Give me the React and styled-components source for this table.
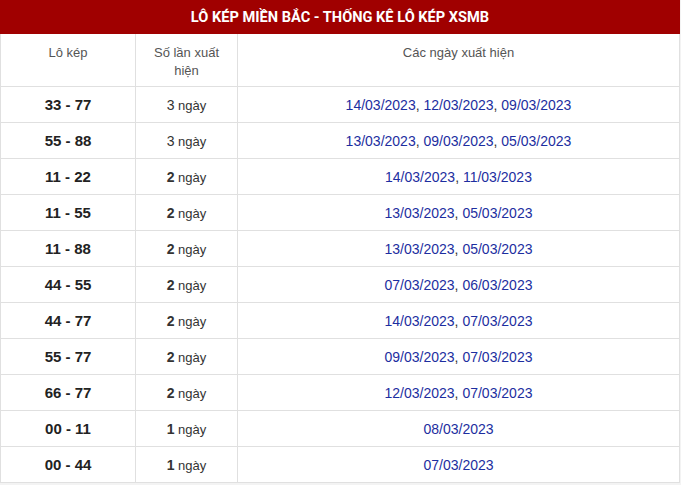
import React from "react";
import styled, { createGlobalStyle } from "styled-components";

const Global = createGlobalStyle`
  html, body { margin: 0; padding: 0; background: #f3f3f3; }
  body { font-family: "Liberation Sans", Arial, sans-serif; }
`;

const Wrap = styled.div`
  width: 680px;
  background: #fff;
`;

const Title = styled.div`
  height: 34px;
  background: #a00000;
  color: #fff;
  font-family: Roboto, "Liberation Sans", sans-serif;
  font-weight: 700;
  font-size: 14.6px;
  display: flex;
  align-items: center;
  justify-content: center;
`;

const Table = styled.table`
  width: 680px;
  border-collapse: collapse;
  table-layout: fixed;
  border-left: 1px solid #e0e0e0;
  border-right: 1px solid #dcdcdc;
`;

const Th = styled.th`
  font-weight: 400;
  font-size: 13px;
  line-height: 18px;
  color: #555;
  text-align: center;
  vertical-align: top;
  padding: 10px 8px 6px;
  height: 36px;
  border: 1px solid #e0e0e0;
  border-top: none;
`;

const Td = styled.td`
  height: 35px;
  padding: 0;
  text-align: center;
  vertical-align: middle;
  border: 1px solid #e0e0e0;
  font-size: ${(p) => (p.$pair ? "15px" : p.$dates ? "14px" : "13px")};
  font-weight: ${(p) => (p.$pair ? 700 : 400)};
  color: ${(p) => (p.$pair ? "#222" : "#333")};
`;

const Count = styled.b`
  font-weight: ${(p) => (p.$bold ? 700 : 400)};
  font-size: 14px;
`;

const DateLink = styled.span`
  color: #1d2ea0;
`;

const rows = [
  ["33 - 77", 3, ["14/03/2023", "12/03/2023", "09/03/2023"]],
  ["55 - 88", 3, ["13/03/2023", "09/03/2023", "05/03/2023"]],
  ["11 - 22", 2, ["14/03/2023", "11/03/2023"]],
  ["11 - 55", 2, ["13/03/2023", "05/03/2023"]],
  ["11 - 88", 2, ["13/03/2023", "05/03/2023"]],
  ["44 - 55", 2, ["07/03/2023", "06/03/2023"]],
  ["44 - 77", 2, ["14/03/2023", "07/03/2023"]],
  ["55 - 77", 2, ["09/03/2023", "07/03/2023"]],
  ["66 - 77", 2, ["12/03/2023", "07/03/2023"]],
  ["00 - 11", 1, ["08/03/2023"]],
  ["00 - 44", 1, ["07/03/2023"]],
];

export default function App() {
  return (
    <>
      <Global />
      <Wrap>
        <Title>LÔ KÉP MIỀN BẮC - THỐNG KÊ LÔ KÉP XSMB</Title>
        <Table>
          <colgroup>
            <col style={{ width: 135 }} />
            <col style={{ width: 102 }} />
            <col />
          </colgroup>
          <thead>
            <tr>
              <Th>Lô kép</Th>
              <Th>Số lần xuất hiện</Th>
              <Th>Các ngày xuất hiện</Th>
            </tr>
          </thead>
          <tbody>
            {rows.map(([pair, n, dates]) => (
              <tr key={pair}>
                <Td $pair>{pair}</Td>
                <Td>
                  <Count $bold={n < 3}>{n}</Count> ngày
                </Td>
                <Td $dates>
                  {dates.map((d, i) => (
                    <React.Fragment key={d}>
                      {i > 0 && ", "}
                      <DateLink>{d}</DateLink>
                    </React.Fragment>
                  ))}
                </Td>
              </tr>
            ))}
          </tbody>
        </Table>
      </Wrap>
    </>
  );
}
